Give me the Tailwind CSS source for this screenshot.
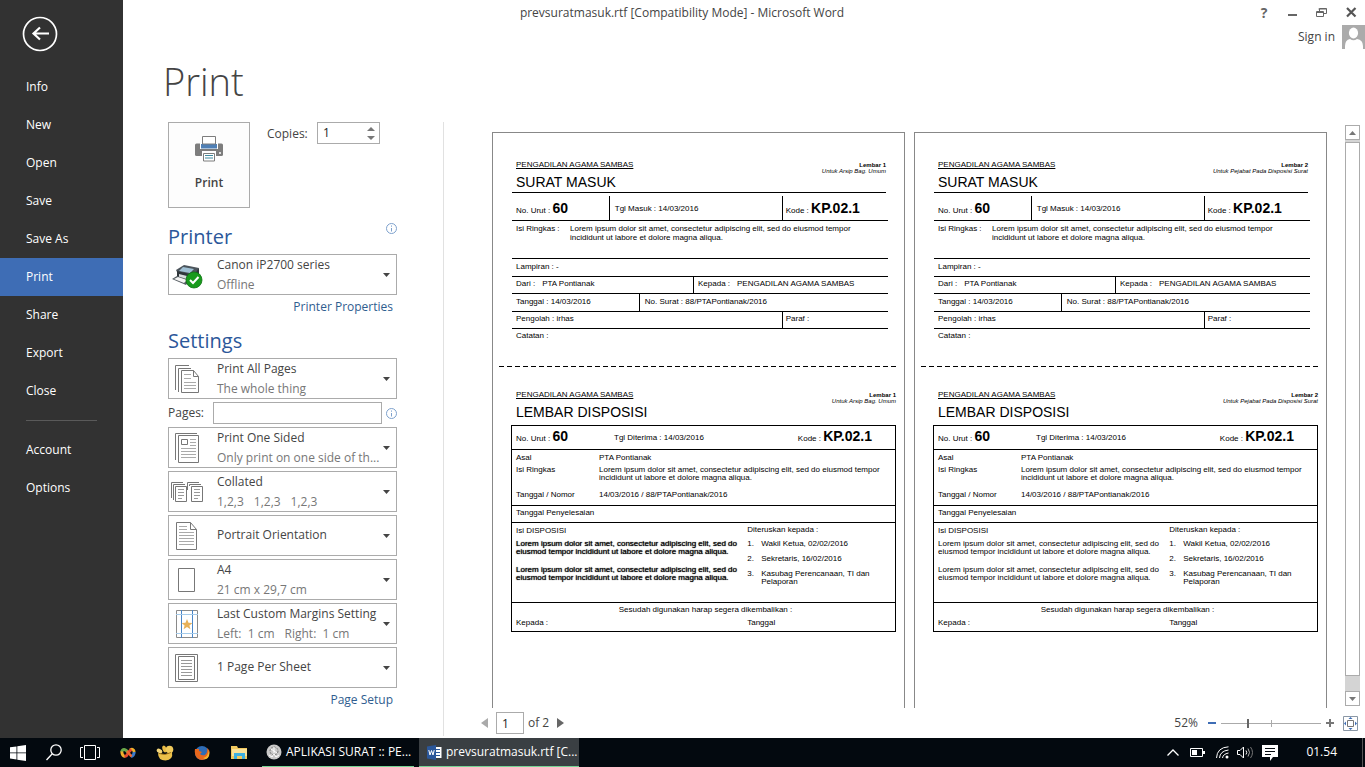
<!DOCTYPE html>
<html lang="id">
<head>
<meta charset="utf-8">
<title>prevsuratmasuk.rtf [Compatibility Mode] - Microsoft Word</title>
<script src="https://cdn.jsdelivr.net/npm/@tailwindcss/browser@4"></script>
</head>
<body class="flex h-screen flex-col overflow-hidden bg-white font-['Open_Sans','Noto_Sans',sans-serif] text-[12px] leading-[16px] text-[#444]">
<div class="flex min-h-0 flex-1">

  <aside class="w-[123px] shrink-0 bg-[#323232] text-white">
    <button aria-label="Back" class="ml-[22px] mt-[16px] block">
      <svg width="36" height="36" viewBox="0 0 36 36" fill="none" stroke="#fff"><circle cx="18" cy="18" r="16.5" stroke-width="1.7"/><path d="M27 17.500H11.500M18 11.500l-6.500 6 6.500 6" stroke-width="2.200"/></svg>
    </button>
    <nav class="mt-[16px] flex flex-col">
      <a href="#" class="flex h-[38px] items-center pl-[26px]">Info</a>
      <a href="#" class="flex h-[38px] items-center pl-[26px]">New</a>
      <a href="#" class="flex h-[38px] items-center pl-[26px]">Open</a>
      <a href="#" class="flex h-[38px] items-center pl-[26px]">Save</a>
      <a href="#" class="flex h-[38px] items-center pl-[26px]">Save As</a>
      <a href="#" aria-current="page" class="flex h-[38px] items-center bg-[#3e6db5] pl-[26px]">Print</a>
      <a href="#" class="flex h-[38px] items-center pl-[26px]">Share</a>
      <a href="#" class="flex h-[38px] items-center pl-[26px]">Export</a>
      <a href="#" class="flex h-[38px] items-center pl-[26px]">Close</a>
      <hr class="mx-[26px] my-[10px] border-[#5a5a5a]">
      <a href="#" class="flex h-[38px] items-center pl-[26px]">Account</a>
      <a href="#" class="flex h-[38px] items-center pl-[26px]">Options</a>
    </nav>
  </aside>

  <main class="flex min-w-0 flex-1 flex-col">
    <header class="flex h-[25px] shrink-0 items-center">
      <div class="flex-1 pr-[14px] text-center">prevsuratmasuk.rtf [Compatibility Mode] - Microsoft Word</div>
      <div class="flex w-[110px] items-center justify-between pl-[4px] pr-[8px]">
        <button aria-label="Help" class="w-[10px] text-[14px] font-bold text-[#666]">?</button>
        <button aria-label="Minimize"><svg width="10" height="10"><path d="M0 6h9v2H0z" fill="#666"/></svg></button>
        <button aria-label="Restore"><svg width="11" height="10" fill="none" stroke="#666"><path d="M3.500 3V.5h7v5H8M2.500 1h8"/><path d="M.5 3.500h7v5h-7zM.5 4.500h7"/></svg></button>
        <button aria-label="Close window"><svg width="11" height="11"><path d="M1 1l8.500 8.500M9.500 1L1 9.500" stroke="#555" stroke-width="2.200"/></svg></button>
      </div>
    </header>
    <div class="flex h-[24px] shrink-0 items-center justify-end gap-[7px]">
      <a href="#">Sign in</a>
      <svg width="23" height="24"><path d="M0 0h23v24H0z" fill="#ababab"/><path d="M3 24v-3q0-6 5-7 3.500 2.500 7 0 6 1 6 7v3z" fill="#fff"/><ellipse cx="11.500" cy="8" rx="4.600" ry="5.400" fill="#fff"/></svg>
    </div>
    <h1 class="mb-[9px] shrink-0 pl-[40px] text-[38px] leading-[64px] font-light">Print</h1>

    <div class="flex min-h-0 flex-1">
      <section class="flex w-[320px] shrink-0 flex-col pl-[45px] pr-[46px]">
        <div class="flex items-start">
          <button class="flex h-[86px] w-[82px] flex-col items-center border border-[#ababab] bg-[#fdfdfd] pt-[13px] font-semibold">
            <svg width="28" height="26" viewBox="0 0 28 26"><rect x="0" y="7.500" width="28" height="12.500" rx="1.500" fill="#7d7d7d"/><path d="M5 7h18v6H5z" fill="#fff"/><path d="M6 8h16v4.500H6z" fill="#4f7fb5"/><path d="M7.500.5h13v7.500h-13z" fill="#fff" stroke="#7d7d7d"/><path d="M7 15h14v5H7z" fill="#fff"/><path d="M8.500 17.500h11v7.500h-11z" fill="#fff" stroke="#7d7d7d"/><path d="M10 19.500h8M10 22h8" stroke="#3f8ba0"/><circle cx="25" cy="17" r="1" fill="#fff"/></svg>
            <span class="mt-[13px]">Print</span>
          </button>
          <label for="copies" class="mt-[4px] ml-[17px] w-[50px]">Copies:</label>
          <div class="flex h-[22px] w-[63px] items-center border border-[#ababab] pr-[4px]">
            <input id="copies" value="1" class="min-w-0 flex-1 pl-[5px] text-[#222] outline-none">
            <div class="flex flex-col gap-[5px]">
              <button aria-label="More copies" class="block"><svg class="block" width="8" height="4"><path d="M0 4l4-4 4 4z" fill="#777"/></svg></button>
              <button aria-label="Fewer copies" class="block"><svg class="block" width="8" height="4"><path d="M0 0l4 4 4-4z" fill="#777"/></svg></button>
            </div>
          </div>
        </div>

        <div class="mt-[15px] flex h-[31px] items-start justify-between">
          <h2 class="text-[20px] leading-[28px] text-[#2b579a]">Printer</h2>
          <svg width="11" height="11" fill="none" stroke="#7da0cc"><circle cx="5.500" cy="5.500" r="5"/><path d="M5.500 5v3.500M5.500 2.500v1.200"/></svg>
        </div>
        <button class="flex h-[41px] items-center border border-[#ababab] text-left" aria-haspopup="listbox">
          <svg class="ml-[3px] mr-[14px] shrink-0" width="31" height="28" viewBox="0 0 31 28"><path d="M4 9l8-5 15 3-3 9-18-3z" fill="#4c555c"/><path d="M11 6l11 2-4 4-11-2z" fill="#9fc0d4"/><path d="M5 10l17 4 5-7v6l-5 7-17-4z" fill="#2f363b"/><path d="M7 13l12 3v4L7 17z" fill="#d8dcde"/><path d="M0 18l5-3 13 4-4 5z" fill="#555d62"/><path d="M2 18l4-2 9 3-3 3z" fill="#f4f4f4"/><circle cx="22" cy="19" r="8" fill="#189a1c" stroke="#0c7411" stroke-width=".8"/><path d="M18 19l3 3 5.500-6" fill="none" stroke="#fff" stroke-width="2"/></svg>
          <span class="flex min-w-0 flex-1 flex-col"><span class="leading-[20px]">Canon iP2700 series</span><span class="leading-[20px] text-[#777]">Offline</span></span>
          <svg class="mx-[6px]" width="7" height="4"><path d="M0 0h7L3.500 4z" fill="#444"/></svg>
        </button>
        <a href="#" class="mt-[4px] self-end pr-[4px] text-[#2f5d8f]">Printer Properties</a>
        <h2 class="mt-[12px] mb-[3px] text-[20px] leading-[28px] text-[#2b579a]">Settings</h2>

        <div class="flex flex-col gap-[3px]">
          <button class="flex h-[41px] items-center border border-[#ababab] text-left" aria-haspopup="listbox">
            <svg class="ml-[3px] mr-[14px] shrink-0" width="31" height="30" fill="none" stroke="#777"><path d="M3.500 26V1.500H17M6.500 28V4.500H19M9.500 6.500h12l5 6v16h-17zM21.500 6.500v6h5"/><path stroke="#aaa" d="M12 10.500h7M12 14.500h7M12 18.500h12M12 21.500h12M12 24.500h12"/></svg>
            <span class="flex min-w-0 flex-1 flex-col"><span class="leading-[20px]">Print All Pages</span><span class="leading-[20px] text-[#777]">The whole thing</span></span>
            <svg class="mx-[6px]" width="7" height="4"><path d="M0 0h7L3.500 4z" fill="#444"/></svg>
          </button>
          <div class="flex h-[22px] items-center justify-between">
            <label for="pages" class="w-[45px]">Pages:</label>
            <input id="pages" class="h-[22px] min-w-0 flex-1 border border-[#ababab] px-1">
            <svg class="ml-[4px]" width="11" height="11" fill="none" stroke="#7da0cc"><circle cx="5.500" cy="5.500" r="5"/><path d="M5.500 5v3.500M5.500 2.500v1.200"/></svg>
          </div>
          <button class="flex h-[41px] items-center border border-[#ababab] text-left" aria-haspopup="listbox">
            <svg class="ml-[3px] mr-[14px] shrink-0" width="31" height="32" fill="none" stroke="#777"><path d="M3.500 28V1.500H25M6.500 3.500h20v27h-20z"/><path d="M9.500 7.500h6v5h-6z"/><path stroke="#aaa" d="M18 7.500h6M18 10.500h6M18 13.500h6M9 16.500h15M9 19.500h15M9 22.500h15M9 25.500h15"/></svg>
            <span class="flex min-w-0 flex-1 flex-col whitespace-nowrap"><span class="leading-[20px]">Print One Sided</span><span class="leading-[20px] text-[#777]">Only print on one side of th...</span></span>
            <svg class="mx-[6px] shrink-0" width="7" height="4"><path d="M0 0h7L3.500 4z" fill="#444"/></svg>
          </button>
          <button class="flex h-[41px] items-center border border-[#ababab] text-left" aria-haspopup="listbox">
            <svg class="ml-[1px] mr-[13px] shrink-0" width="34" height="22" fill="none" stroke="#777"><path d="M1.500 17V1.500H13M3.500 19V3.500H15M5.500 5.500h11v15h-11zM17.500 9V1.500H29M19.500 5V3.500H31M21.500 5.500h11v15h-11z"/><path stroke="#999" d="M8 8.500h6M8 11.500h6M8 14.500h6M8 17.500h4M24 8.500h6M24 11.500h6M24 14.500h6M24 17.500h4"/></svg>
            <span class="flex min-w-0 flex-1 flex-col"><span class="leading-[20px]">Collated</span><span class="flex gap-[10px] leading-[20px] text-[#777]"><span>1,2,3</span><span>1,2,3</span><span>1,2,3</span></span></span>
            <svg class="mx-[6px]" width="7" height="4"><path d="M0 0h7L3.500 4z" fill="#444"/></svg>
          </button>
          <button class="flex h-[41px] items-center border border-[#ababab] text-left" aria-haspopup="listbox">
            <svg class="ml-[3px] mr-[14px] shrink-0" width="31" height="30" fill="none" stroke="#777"><path d="M4.500 1.500h14l6 7v20h-20zM18.500 1.500v7h6"/><path stroke="#aaa" d="M7 5.500h8M7 8.500h8M7 11.500h15M7 14.500h15M7 17.500h15M7 20.500h15M7 23.500h15"/></svg>
            <span class="min-w-0 flex-1 pb-[2px]">Portrait Orientation</span>
            <svg class="mx-[6px]" width="7" height="4"><path d="M0 0h7L3.500 4z" fill="#444"/></svg>
          </button>
          <button class="flex h-[41px] items-center border border-[#ababab] text-left" aria-haspopup="listbox">
            <svg class="ml-[3px] mr-[14px] shrink-0" width="31" height="26" fill="none" stroke="#777"><path d="M6.500 1.500h16v23h-16z"/></svg>
            <span class="flex min-w-0 flex-1 flex-col"><span class="leading-[20px]">A4</span><span class="leading-[20px] text-[#777]">21 cm x 29,7 cm</span></span>
            <svg class="mx-[6px]" width="7" height="4"><path d="M0 0h7L3.500 4z" fill="#444"/></svg>
          </button>
          <button class="flex h-[41px] items-center border border-[#ababab] text-left" aria-haspopup="listbox">
            <svg class="ml-[3px] mr-[14px] shrink-0" width="31" height="30" fill="none"><path d="M4.500 1.500h21v27h-21z" stroke="#8a8a8a"/><path d="M9.500 1v28M20.500 1v28" stroke="#4a86c8"/><path d="M4 5.500h22M4 24.500h22" stroke="#a5cbea"/><path d="M15 10l1.500 3.700 4 .2-3.100 2.500 1 3.900-3.400-2.200-3.400 2.200 1-3.900-3.100-2.500 4-.2z" fill="#e8b25a"/></svg>
            <span class="flex min-w-0 flex-1 flex-col whitespace-nowrap"><span class="leading-[20px]">Last Custom Margins Setting</span><span class="flex gap-[10px] leading-[20px] text-[#777]"><span>Left:&nbsp; 1 cm</span><span>Right:&nbsp; 1 cm</span></span></span>
            <svg class="mx-[6px] shrink-0" width="7" height="4"><path d="M0 0h7L3.500 4z" fill="#444"/></svg>
          </button>
          <button class="flex h-[41px] items-center border border-[#ababab] text-left" aria-haspopup="listbox">
            <svg class="ml-[3px] mr-[14px] shrink-0" width="31" height="30" fill="none" stroke="#777"><path d="M3.500 1.500h22v27h-22zM6.500 3.500h16v23h-16z"/><path stroke="#999" d="M9 7.500h11M9 10.500h11M9 13.500h11M9 16.500h11M9 19.500h11M9 22.500h11"/></svg>
            <span class="min-w-0 flex-1 pb-[2px]">1 Page Per Sheet</span>
            <svg class="mx-[6px]" width="7" height="4"><path d="M0 0h7L3.500 4z" fill="#444"/></svg>
          </button>
        </div>
        <a href="#" class="mt-[4px] self-end pr-[4px] text-[#2f5d8f]">Page Setup</a>
      </section>

      <section class="mb-[2px] flex min-w-0 flex-1 flex-col border-l border-[#e1e1e1]">
        <div class="flex min-h-0 flex-1 gap-[18px] pl-[48px] pr-[5px]">
          <div id="sheets" class="grid min-w-0 flex-1 grid-cols-2 gap-[9px] overflow-hidden pt-[10px]"></div>
          <div class="mt-[3px] mb-[2px] flex w-[15px] flex-col bg-[#d4d4d4]">
            <button aria-label="Scroll up" class="flex h-[15px] items-center justify-center border border-[#ababab] bg-white"><svg width="7" height="4"><path d="M0 4l3.500-4L7 4z" fill="#777"/></svg></button>
            <div class="mt-[2px] mb-[15px] flex-1 border border-[#ababab] bg-white"></div>
            <button aria-label="Scroll down" class="flex h-[15px] items-center justify-center border border-[#ababab] bg-white"><svg width="7" height="4"><path d="M0 0l3.500 4L7 0z" fill="#777"/></svg></button>
          </div>
        </div>
        <footer class="flex h-[28px] shrink-0 items-center pt-[2px] pl-[37px] pr-[7px]">
          <button aria-label="Previous page"><svg width="7" height="10"><path d="M7 0v10L0 5z" fill="#aaa"/></svg></button>
          <input aria-label="Current page" value="1" class="ml-[8px] h-[22px] w-[28px] border border-[#ababab] pl-[5px] text-[#222]">
          <span class="mx-[4px]">of 2</span>
          <button aria-label="Next page" class="ml-[4px]"><svg width="7" height="10"><path d="M0 0v10l7-5z" fill="#666"/></svg></button>
          <span class="ml-auto">52%</span>
          <button aria-label="Zoom out" class="ml-[10px]"><svg width="8" height="8"><path d="M0 3h8v2H0z" fill="#3e6db5"/></svg></button>
          <div class="ml-[5px] flex items-center bg-[linear-gradient(#aaa,#aaa),linear-gradient(#aaa,#aaa)] bg-[length:100%_1px,1px_7px] bg-[position:center,50px_center] bg-no-repeat">
            <input type="range" aria-label="Zoom" min="0" max="100" value="27" class="h-[16px] w-[100px] appearance-none bg-transparent [&::-webkit-slider-thumb]:h-[9px] [&::-webkit-slider-thumb]:w-[2px] [&::-webkit-slider-thumb]:appearance-none [&::-webkit-slider-thumb]:bg-[#666]">
          </div>
          <button aria-label="Zoom in" class="ml-[5px]"><svg width="8" height="8"><path d="M0 3h3V0h2v3h3v2H5v3H3V5H0z" fill="#777"/></svg></button>
          <button aria-label="Zoom to page" class="ml-[9px]"><svg width="15" height="15" fill="none"><path d="M.5.5h14v14H.5z" stroke="#8a97a5"/><path d="M4.500 4.500h6v6h-6z" stroke="#777"/><path d="M7.500 1l2 2h-4zM7.500 14l2-2h-4zM1 7.500l2-2v4zM14 7.500l-2-2v4z" fill="#3e6db5"/></svg></button>
        </footer>
      </section>
    </div>
  </main>
</div>

<footer class="flex h-[29px] shrink-0 items-center bg-[#03090f] text-white">
  <button aria-label="Start" class="ml-[10px]"><svg width="16" height="16" fill="#fff"><path d="M0 2.300l6.500-.9v6.100H0zM7.300 1.300L16 0v7.500H7.300zM0 8.300h6.500v6.200L0 13.600zM7.300 8.300H16V16l-8.700-1.300z"/></svg></button>
  <button aria-label="Search" class="ml-[20px]"><svg width="16" height="17" fill="none" stroke="#fff" stroke-width="1.300"><circle cx="10" cy="6" r="5.200"/><path d="M6.300 9.700L.5 16"/></svg></button>
  <button aria-label="Task view" class="ml-[18px]"><svg width="20" height="15" fill="none" stroke="#fff"><path d="M4.500.5h11v14h-11zM3 2.500H.5v10H3M17 2.500h2.500v10H17"/></svg></button>
  <button aria-label="Infinity app" class="ml-[20px]"><svg width="16" height="12" fill="none" stroke-width="3"><path d="M8 6C6 1.500 2 1.500 1.800 5" stroke="#6aa84a"/><path d="M1.800 4.500Q2 9 5 9.500" stroke="#f0b02c"/><path d="M14.200 5Q14 9 11 9.500" stroke="#3b78c9"/><path d="M10 3q3.500-2 4.200 2" stroke="#f0b02c"/><path d="M4.500 9.500Q7 9 8 6.500T11.500 2.500" stroke="#e5482f"/><path d="M7 4l4.500 5.500" stroke="#ef6a2e" stroke-width="2.500"/></svg></button>
  <button aria-label="Paw app" class="ml-[20px]"><svg width="18" height="16"><path d="M2 8q7 3 14-1 1.500 8-6.500 8.500Q2 15.500 2 8z" fill="#ecc04a"/><ellipse cx="3.500" cy="6" rx="3" ry="2" fill="#f4d67a" transform="rotate(30 3.500 6)"/><ellipse cx="8.500" cy="4" rx="2" ry="3.500" fill="#e9bb45" transform="rotate(-20 8.500 4)"/><circle cx="13.500" cy="4.500" r="3.800" fill="#f0ca5c"/><path d="M3 8.500q6 2.500 12-1" stroke="#a87718" fill="none"/></svg></button>
  <button aria-label="Firefox" class="ml-[20px]"><svg width="16" height="16"><circle cx="8" cy="8" r="7" fill="#2f6cb5"/><path d="M1 4q-1 6 2 9 5 4 10 0 3-3 2-8l-2-2q1 5-2 7-3 1-5-1l2-2-3-1V4z" fill="#e8671c"/><path d="M15 5q-1 7-6 8 4 3 6-2 1-3 0-6" fill="#f7b52c"/></svg></button>
  <button aria-label="File Explorer" class="ml-[21px]"><svg width="17" height="15"><path d="M0 1h6l1 2h9v11H0z" fill="#f2c95f"/><path d="M1 4h15v7H1z" fill="#fbe29a"/><path d="M3 14V8h11v6h-3v-3H6v3z" fill="#3fb0e0"/></svg></button>
  <button class="ml-[14px] flex h-full w-[152px] items-center border-b border-[#76d394] pl-[4px] whitespace-nowrap">
    <svg class="mr-[4px] shrink-0" width="16" height="16"><circle cx="8" cy="8" r="7.500" fill="#c9c9c9"/><circle cx="8" cy="7" r="4" fill="none" stroke="#777" stroke-dasharray="2 1"/><path d="M3 11l3 2 2-3 2 3 3-2M8 3v6M5 5l6 4" stroke="#fff" fill="none"/></svg>
    APLIKASI SURAT :: PE...
  </button>
  <button class="ml-[5px] flex h-full w-[160px] items-center border-b border-[#76d394] bg-[#3a3f43] pl-[8px] whitespace-nowrap">
    <svg class="mr-[4px] shrink-0" width="15" height="15" fill="none"><path d="M8 2h6.500v11H8z" fill="#fff"/><path d="M9 4.500h4M9 7.500h4M9 10.500h4" stroke="#2b579a"/><path d="M0 1.500L9 0v15l-9-1.500z" fill="#2b579a"/><path d="M1.800 5l1.200 5 1.500-4.500L6 10l1.200-5" stroke="#fff"/></svg>
    prevsuratmasuk.rtf [C...
  </button>
  <div class="ml-auto flex items-center">
    <button aria-label="Show hidden icons"><svg width="12" height="8" fill="none" stroke="#fff" stroke-width="1.300"><path d="M.5 6.500L6 1l5.500 5.500"/></svg></button>
    <svg class="ml-[11px]" width="15" height="9"><path d="M.5.5h12v8H.5z" fill="none" stroke="#fff"/><path d="M2 2h5v5H2zM13 3h2v3h-2z" fill="#fff"/></svg>
    <svg class="ml-[11px]" width="13" height="13" fill="none" stroke="#fff"><path d="M.5 12Q1 1.500 12.500.8M3.500 12Q4 5 12.500 4M6.500 12Q7 8 12.500 7"/><circle cx="11" cy="11" r="1.500" fill="#fff" stroke="none"/></svg>
    <svg class="ml-[8px]" width="17" height="13" fill="none" stroke="#fff"><path d="M.5 4.500H3L6.500 1v11L3 8.500H.5z"/><path d="M9 4.500q1.500 2 0 4"/><path stroke="#aaa" d="M11 2.500q3 4 0 8"/><path stroke="#777" d="M13.500 1q4 5.500 0 11"/></svg>
    <svg class="ml-[8px]" width="16" height="16"><path d="M0 0h16v12h-5l-3 4v-4H0z" fill="#fff"/><path d="M3 3.500h10M3 6.500h10M3 9.500h6" stroke="#03090f"/></svg>
    <span class="ml-[28px] mb-[2px]">01.54</span>
    <div class="ml-[25px] h-[29px] w-[3px] border-l border-[#555]"></div>
  </div>
</footer>

<template id="sheet">
  <article class="h-[640px] border border-b-0 border-[#888] bg-white pt-[27px] pl-[6px] pr-[8px] font-['Liberation_Sans',Arial,sans-serif] text-[8px] leading-[9px] text-black">
    <div class="pl-[13px] pr-[8px]">
      <div class="mr-[2px] flex h-[33px] items-start justify-between border-b border-black pl-[4px]">
        <div><p class="leading-[10px] underline underline-offset-1">PENGADILAN AGAMA SAMBAS</p><h3 class="mt-[3px] text-[14px] leading-[18px]">SURAT MASUK</h3></div>
        <div class="mt-[2px] text-right text-[6px] leading-[6px]"><p data-copy class="font-bold"></p><p data-for class="italic"></p></div>
      </div>
      <div class="mt-[3px] flex h-[25px] border-b border-black">
        <div class="w-[26%] border-r border-black pt-[4px] pl-[4px] leading-[16px]">No. Urut : <b class="text-[14px]">60</b></div>
        <div class="w-[46%] border-r border-black pt-[8px] pl-[5px]">Tgl Masuk : 14/03/2016</div>
        <div class="pt-[4px] pl-[3px] leading-[16px]">Kode : <b class="text-[14px]">KP.02.1</b></div>
      </div>
      <div class="flex h-[38px] border-b border-black pt-[3px] pl-[4px]"><p class="w-[54px] shrink-0">Isi Ringkas :</p><p>Lorem ipsum dolor sit amet, consectetur adipiscing elit, sed do eiusmod tempor<br>incididunt ut labore et dolore magna aliqua.</p></div>
      <div class="h-[18px] border-b border-black pt-[3px] pl-[4px]">Lampiran : -</div>
      <div class="flex h-[17px] border-b border-black"><div class="flex w-[182px] shrink-0 gap-[7px] border-r border-black pt-[2px] pl-[4px]"><span>Dari :</span><span>PTA Pontianak</span></div><div class="flex gap-[7px] pt-[2px] pl-[4px]"><span>Kepada :</span><span>PENGADILAN AGAMA SAMBAS</span></div></div>
      <div class="flex h-[18px] border-b border-black"><div class="w-[34%] border-r border-black pt-[3px] pl-[4px]">Tanggal : 14/03/2016</div><div class="pt-[3px] pl-[5px]">No. Surat : 88/PTAPontianak/2016</div></div>
      <div class="flex h-[17px] border-b border-black"><div class="w-[72%] border-r border-black pt-[2px] pl-[4px]">Pengolah : irhas</div><div class="pt-[2px] pl-[3px]">Paraf :</div></div>
      <div class="pt-[2px] pl-[4px]">Catatan :</div>
    </div>
    <div class="mt-[26px] h-px bg-[repeating-linear-gradient(90deg,#000_0_5px,transparent_5px_8px)]"></div>
    <div class="pl-[12px]">
      <div class="mt-[23px] flex items-start justify-between pl-[5px]">
        <div><p class="leading-[10px] underline underline-offset-1">PENGADILAN AGAMA SAMBAS</p><h3 class="mt-[3px] text-[14px] leading-[18px]">LEMBAR DISPOSISI</h3></div>
        <div class="mt-[2px] text-right text-[6px] leading-[6px]"><p data-copy class="font-bold"></p><p data-for class="italic"></p></div>
      </div>
      <div class="mt-[4px] border border-black">
        <div class="flex h-[24px] border-b border-black pl-[4px]">
          <div class="w-[98px] pt-[2px] leading-[16px]">No. Urut : <b class="text-[14px]">60</b></div>
          <div class="flex-1 pt-[7px]">Tgl Diterima : 14/03/2016</div>
          <div class="pt-[2px] pr-[23px] leading-[16px]">Kode : <b class="text-[14px]">KP.02.1</b></div>
        </div>
        <div class="grid h-[56px] grid-cols-[83px_1fr] grid-rows-[12px_25px_10px] border-b border-black pt-[4px] pl-[4px] leading-[8px]">
          <span>Asal</span><span>PTA Pontianak</span>
          <span>Isi Ringkas</span><span>Lorem ipsum dolor sit amet, consectetur adipiscing elit, sed do eiusmod tempor<br>incididunt ut labore et dolore magna aliqua.</span>
          <span>Tanggal / Nomor</span><span>14/03/2016 / 88/PTAPontianak/2016</span>
        </div>
        <div class="h-[17px] border-b border-black pt-[2px] pl-[4px]">Tanggal Penyelesaian</div>
        <div class="flex h-[80px] border-b border-black pt-[2px] pl-[4px]">
          <div class="w-[61%] pt-[1px]">
            <p>Isi DISPOSISI</p>
            <div data-note class="mt-[5px] leading-[8px] whitespace-nowrap"><p>Lorem ipsum dolor sit amet, consectetur adipiscing elit, sed do<br>eiusmod tempor incididunt ut labore et dolore magna aliqua.</p><p class="mt-[10px]">Lorem ipsum dolor sit amet, consectetur adipiscing elit, sed do<br>eiusmod tempor incididunt ut labore et dolore magna aliqua.</p></div>
          </div>
          <div class="w-[39%]">
            <p>Diteruskan kepada :</p>
            <ol class="mt-[6px] flex flex-col gap-[7px] leading-[8px]"><li class="flex"><span class="w-[14px] shrink-0">1.</span>Wakil Ketua, 02/02/2016</li><li class="flex"><span class="w-[14px] shrink-0">2.</span>Sekretaris, 16/02/2016</li><li class="flex"><span class="w-[14px] shrink-0">3.</span><span>Kasubag Perencanaan, TI dan<br>Pelaporan</span></li></ol>
          </div>
        </div>
        <div class="h-[28px] pt-[2px] pl-[4px]">
          <p class="text-center">Sesudah digunakan harap segera dikembalikan :</p>
          <div class="mt-[4px] flex"><span class="w-[61%]">Kepada :</span><span>Tanggal</span></div>
        </div>
      </div>
    </div>
  </article>
</template>
<script>
  const copies = [
    { name: 'Lembar 1', target: 'Untuk Arsip Bag. Umum', strong: true },
    { name: 'Lembar 2', target: 'Untuk Pejabat Pada Disposisi Surat', strong: false }
  ];
  for (const copy of copies) {
    const sheet = document.getElementById('sheet').content.cloneNode(true);
    sheet.querySelectorAll('[data-copy]').forEach(el => el.textContent = copy.name);
    sheet.querySelectorAll('[data-for]').forEach(el => el.textContent = copy.target);
    if (copy.strong) sheet.querySelector('[data-note]').classList.add('[text-shadow:0_0_1px_#000]');
    document.getElementById('sheets').append(sheet);
  }
</script>
</body>
</html>
